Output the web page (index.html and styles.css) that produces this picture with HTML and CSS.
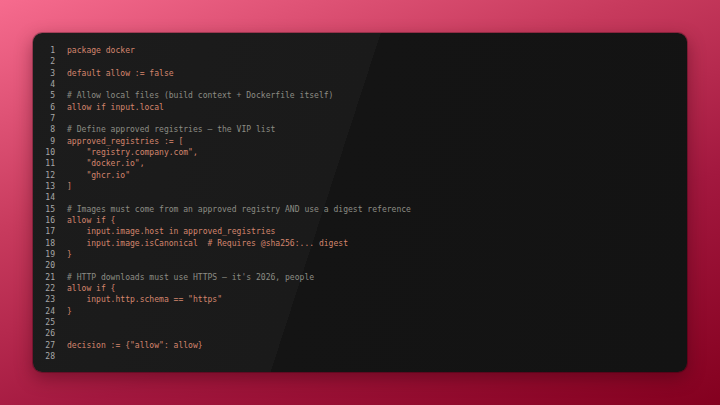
FILE: index.html
```html
<!DOCTYPE html>
<html>
<head>
<meta charset="utf-8">
<link rel="stylesheet" href="styles.css">
</head>
<body>
<div class="stage">
  <div class="card">
    <pre class="nums">1
2
3
4
5
6
7
8
9
10
11
12
13
14
15
16
17
18
19
20
21
22
23
24
25
26
27
28</pre>
    <pre class="code">package docker

default allow := false

<span class="c"># Allow local files (build context + Dockerfile itself)</span>
allow if input.local

<span class="c"># Define approved registries — the VIP list</span>
approved_registries := [
    "registry.company.com",
    "docker.io",
    "ghcr.io"
]

<span class="c"># Images must come from an approved registry AND use a digest reference</span>
allow if {
    input.image.host in approved_registries
    input.image.isCanonical  # Requires @sha256:... digest
}

<span class="c"># HTTP downloads must use HTTPS — it's 2026, people</span>
allow if {
    input.http.schema == "https"
}


decision := {"allow": allow}
</pre>
  </div>
</div>
</body>
</html>
```

FILE: styles.css
```css
html, body {
  margin: 0;
  padding: 0;
  width: 720px;
  height: 405px;
  overflow: hidden;
}
.stage {
  width: 720px;
  height: 405px;
  box-sizing: border-box;
  padding: 33px;
  background: linear-gradient(160deg, #f66b8e 0%, #c73a5d 35%, #a3183f 65%, #84001f 100%);
}
.card {
  height: 339px;
  box-sizing: border-box;
  border-radius: 9px;
  padding: 12px 12px;
  display: flex;
  gap: 12px;
  background: linear-gradient(108deg, #1c1c1c 0%, #1a1a1a 45.5%, #141414 45.5%, #131313 100%);
  box-shadow: 0 6px 18px rgba(60, 0, 15, 0.45), 0 0 0 1px rgba(0,0,0,0.25);
}
pre {
  margin: 0;
  font-family: "DejaVu Sans Mono", monospace;
  font-size: 8.05px;
  line-height: 11.33px;
}
.nums {
  width: 10px;
  text-align: right;
  color: #a8a8a8;
}
.code {
  color: #d3856d;
}
.c {
  color: #8c8c84;
}
```
